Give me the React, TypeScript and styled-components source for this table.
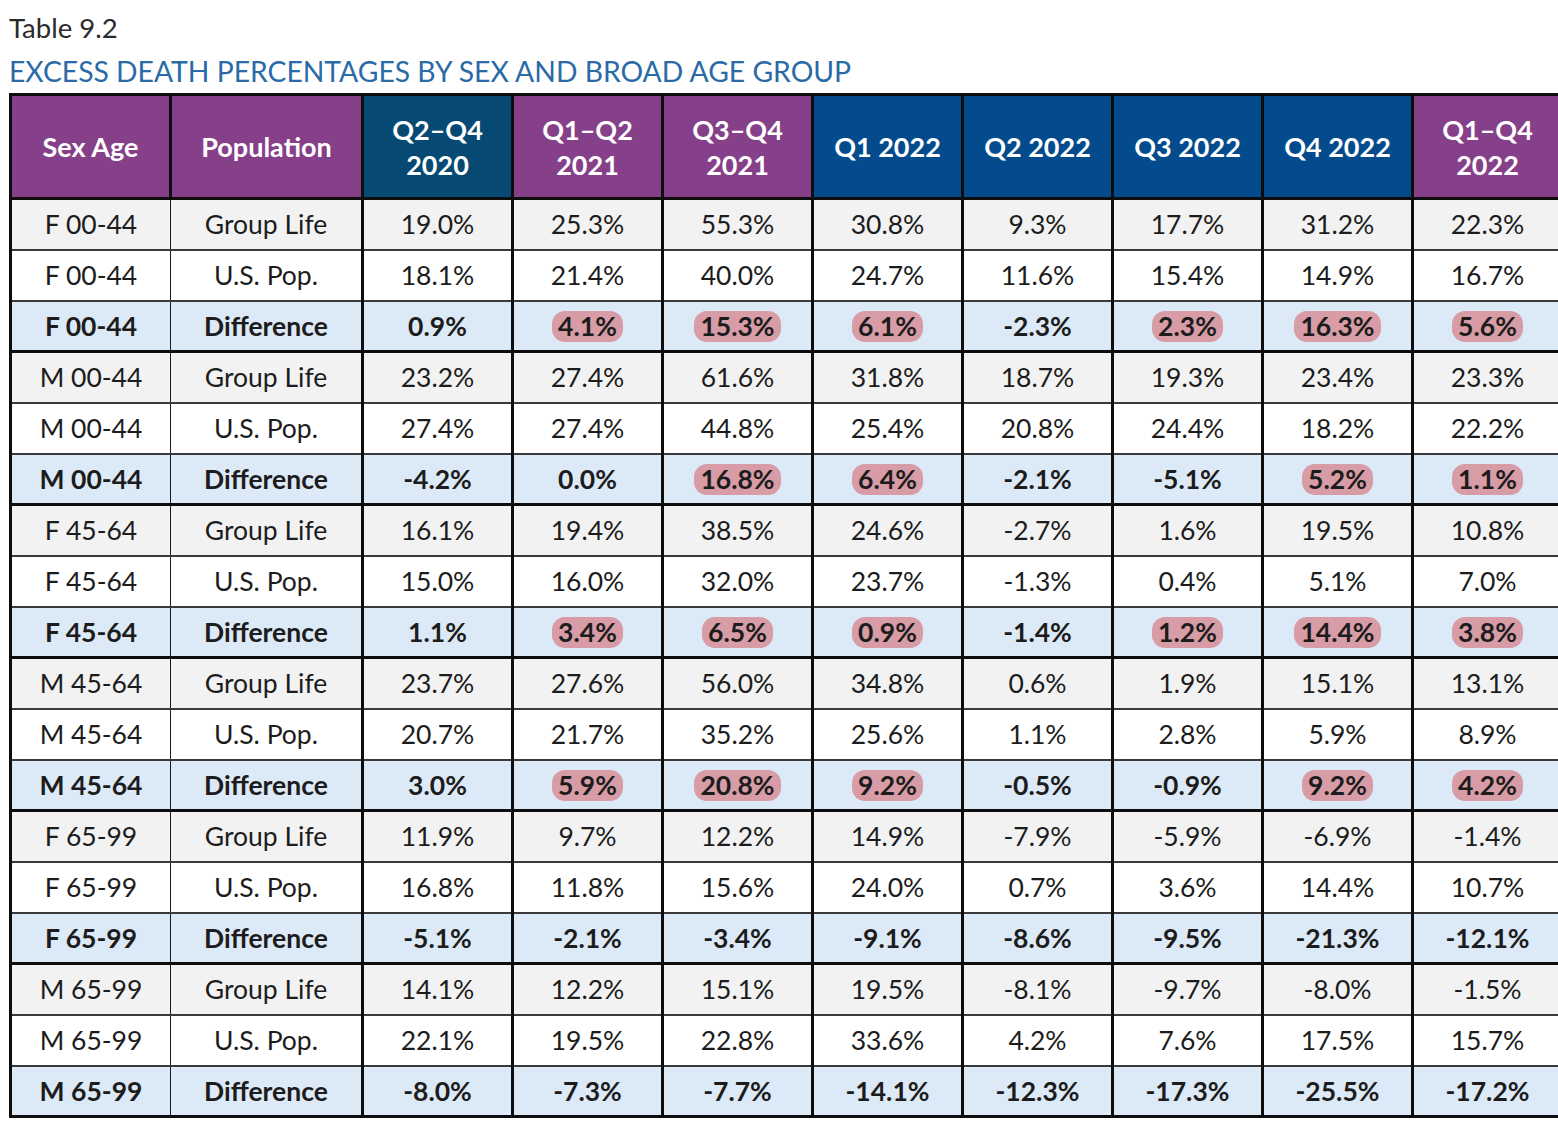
import * as React from 'react';
import styled, { createGlobalStyle } from 'styled-components';

const GlobalStyle = createGlobalStyle`
  html, body {
    margin: 0;
    padding: 0;
    background: #ffffff;
    overflow: hidden;
  }
  body {
    font-family: Lato, "Liberation Sans", sans-serif;
  }
`;

const Page = styled.div`
  padding: 11px 0 0 9px;
  width: 1600px;
`;

const Caption = styled.div`
  font-size: 27.5px;
  line-height: 34px;
  color: #2b2b2b;
`;

const Subtitle = styled.div`
  font-size: 28.3px;
  line-height: 36px;
  margin-top: 8px;
  color: #2a6aa6;
`;

const Table = styled.table`
  margin-top: 4px;
  border-collapse: collapse;
  table-layout: fixed;
  width: 1553px;
  border: 3px solid #0d0d0d;
`;

type Tone = 'purple' | 'teal' | 'blue';

const toneColor: Record<Tone, string> = {
  purple: '#86408a',
  teal: '#064a73',
  blue: '#034b8d',
};

const HeadCell = styled.th<{ $tone: Tone }>`
  height: 101px;
  padding: 0;
  background: ${(p) => toneColor[p.$tone]};
  color: #ffffff;
  font-size: 27px;
  line-height: 35px;
  font-weight: 700;
  text-align: center;
  border: 3px solid #0d0d0d;
`;

type Kind = 'group' | 'pop' | 'diff';

const rowBg: Record<Kind, string> = {
  group: '#f2f2f2',
  pop: '#ffffff',
  diff: '#dce9f6',
};

const Row = styled.tr<{ $kind: Kind }>`
  height: 51px;
  background: ${(p) => rowBg[p.$kind]};
  border-bottom: ${(p) => (p.$kind === 'diff' ? '3px solid #0d0d0d' : '2px solid #3a3a3a')};
`;

const Cell = styled.td<{ $bold?: boolean; $thinRight?: boolean }>`
  padding: 0;
  text-align: center;
  font-size: 26.5px;
  color: #1c1c1c;
  font-weight: ${(p) => (p.$bold ? 700 : 400)};
  border-right: ${(p) => (p.$thinRight ? '1.5px solid #1a1a1a' : '3px solid #0d0d0d')};
`;

const Pill = styled.span`
  display: inline-block;
  background: #d79ca6;
  border-radius: 13px;
  padding: 0 6px;
  line-height: 31px;
`;

type Group = { label: string; life: number[]; pop: number[]; diff: number[]; marks: number[] };

const groups: Group[] = [
  {
    label: 'F 00-44',
    life: [19.0, 25.3, 55.3, 30.8, 9.3, 17.7, 31.2, 22.3],
    pop: [18.1, 21.4, 40.0, 24.7, 11.6, 15.4, 14.9, 16.7],
    diff: [0.9, 4.1, 15.3, 6.1, -2.3, 2.3, 16.3, 5.6],
    marks: [1, 2, 3, 5, 6, 7],
  },
  {
    label: 'M 00-44',
    life: [23.2, 27.4, 61.6, 31.8, 18.7, 19.3, 23.4, 23.3],
    pop: [27.4, 27.4, 44.8, 25.4, 20.8, 24.4, 18.2, 22.2],
    diff: [-4.2, 0.0, 16.8, 6.4, -2.1, -5.1, 5.2, 1.1],
    marks: [2, 3, 6, 7],
  },
  {
    label: 'F 45-64',
    life: [16.1, 19.4, 38.5, 24.6, -2.7, 1.6, 19.5, 10.8],
    pop: [15.0, 16.0, 32.0, 23.7, -1.3, 0.4, 5.1, 7.0],
    diff: [1.1, 3.4, 6.5, 0.9, -1.4, 1.2, 14.4, 3.8],
    marks: [1, 2, 3, 5, 6, 7],
  },
  {
    label: 'M 45-64',
    life: [23.7, 27.6, 56.0, 34.8, 0.6, 1.9, 15.1, 13.1],
    pop: [20.7, 21.7, 35.2, 25.6, 1.1, 2.8, 5.9, 8.9],
    diff: [3.0, 5.9, 20.8, 9.2, -0.5, -0.9, 9.2, 4.2],
    marks: [1, 2, 3, 6, 7],
  },
  {
    label: 'F 65-99',
    life: [11.9, 9.7, 12.2, 14.9, -7.9, -5.9, -6.9, -1.4],
    pop: [16.8, 11.8, 15.6, 24.0, 0.7, 3.6, 14.4, 10.7],
    diff: [-5.1, -2.1, -3.4, -9.1, -8.6, -9.5, -21.3, -12.1],
    marks: [],
  },
  {
    label: 'M 65-99',
    life: [14.1, 12.2, 15.1, 19.5, -8.1, -9.7, -8.0, -1.5],
    pop: [22.1, 19.5, 22.8, 33.6, 4.2, 7.6, 17.5, 15.7],
    diff: [-8.0, -7.3, -7.7, -14.1, -12.3, -17.3, -25.5, -17.2],
    marks: [],
  },
];

const headers: { text: string[]; tone: Tone }[] = [
  { text: ['Sex Age'], tone: 'purple' },
  { text: ['Population'], tone: 'purple' },
  { text: ['Q2–Q4', '2020'], tone: 'teal' },
  { text: ['Q1–Q2', '2021'], tone: 'purple' },
  { text: ['Q3–Q4', '2021'], tone: 'purple' },
  { text: ['Q1 2022'], tone: 'blue' },
  { text: ['Q2 2022'], tone: 'blue' },
  { text: ['Q3 2022'], tone: 'blue' },
  { text: ['Q4 2022'], tone: 'blue' },
  { text: ['Q1–Q4', '2022'], tone: 'purple' },
];

const fmt = (n: number) => `${n.toFixed(1)}%`;

const DataRow: React.FC<{ kind: Kind; label: string; name: string; values: number[]; marks?: number[] }> = ({
  kind,
  label,
  name,
  values,
  marks = [],
}) => {
  const bold = kind === 'diff';
  return (
    <Row $kind={kind}>
      <Cell $bold={bold} $thinRight>
        {label}
      </Cell>
      <Cell $bold={bold}>{name}</Cell>
      {values.map((v, i) => (
        <Cell key={i} $bold={bold}>
          {marks.includes(i) ? <Pill>{fmt(v)}</Pill> : fmt(v)}
        </Cell>
      ))}
    </Row>
  );
};

export default function App() {
  return (
    <>
      <GlobalStyle />
      <Page>
        <Caption>Table 9.2</Caption>
        <Subtitle>EXCESS DEATH PERCENTAGES BY SEX AND BROAD AGE GROUP</Subtitle>
        <Table>
          <colgroup>
            <col style={{ width: 160 }} />
            <col style={{ width: 192 }} />
            {Array.from({ length: 8 }).map((_, i) => (
              <col key={i} style={{ width: 150 }} />
            ))}
          </colgroup>
          <thead>
            <tr>
              {headers.map((h, i) => (
                <HeadCell key={i} $tone={h.tone}>
                  {h.text.map((t, j) => (
                    <div key={j}>{t}</div>
                  ))}
                </HeadCell>
              ))}
            </tr>
          </thead>
          <tbody>
            {groups.map((g) => (
              <React.Fragment key={g.label}>
                <DataRow kind="group" label={g.label} name="Group Life" values={g.life} />
                <DataRow kind="pop" label={g.label} name="U.S. Pop." values={g.pop} />
                <DataRow kind="diff" label={g.label} name="Difference" values={g.diff} marks={g.marks} />
              </React.Fragment>
            ))}
          </tbody>
        </Table>
      </Page>
    </>
  );
}
